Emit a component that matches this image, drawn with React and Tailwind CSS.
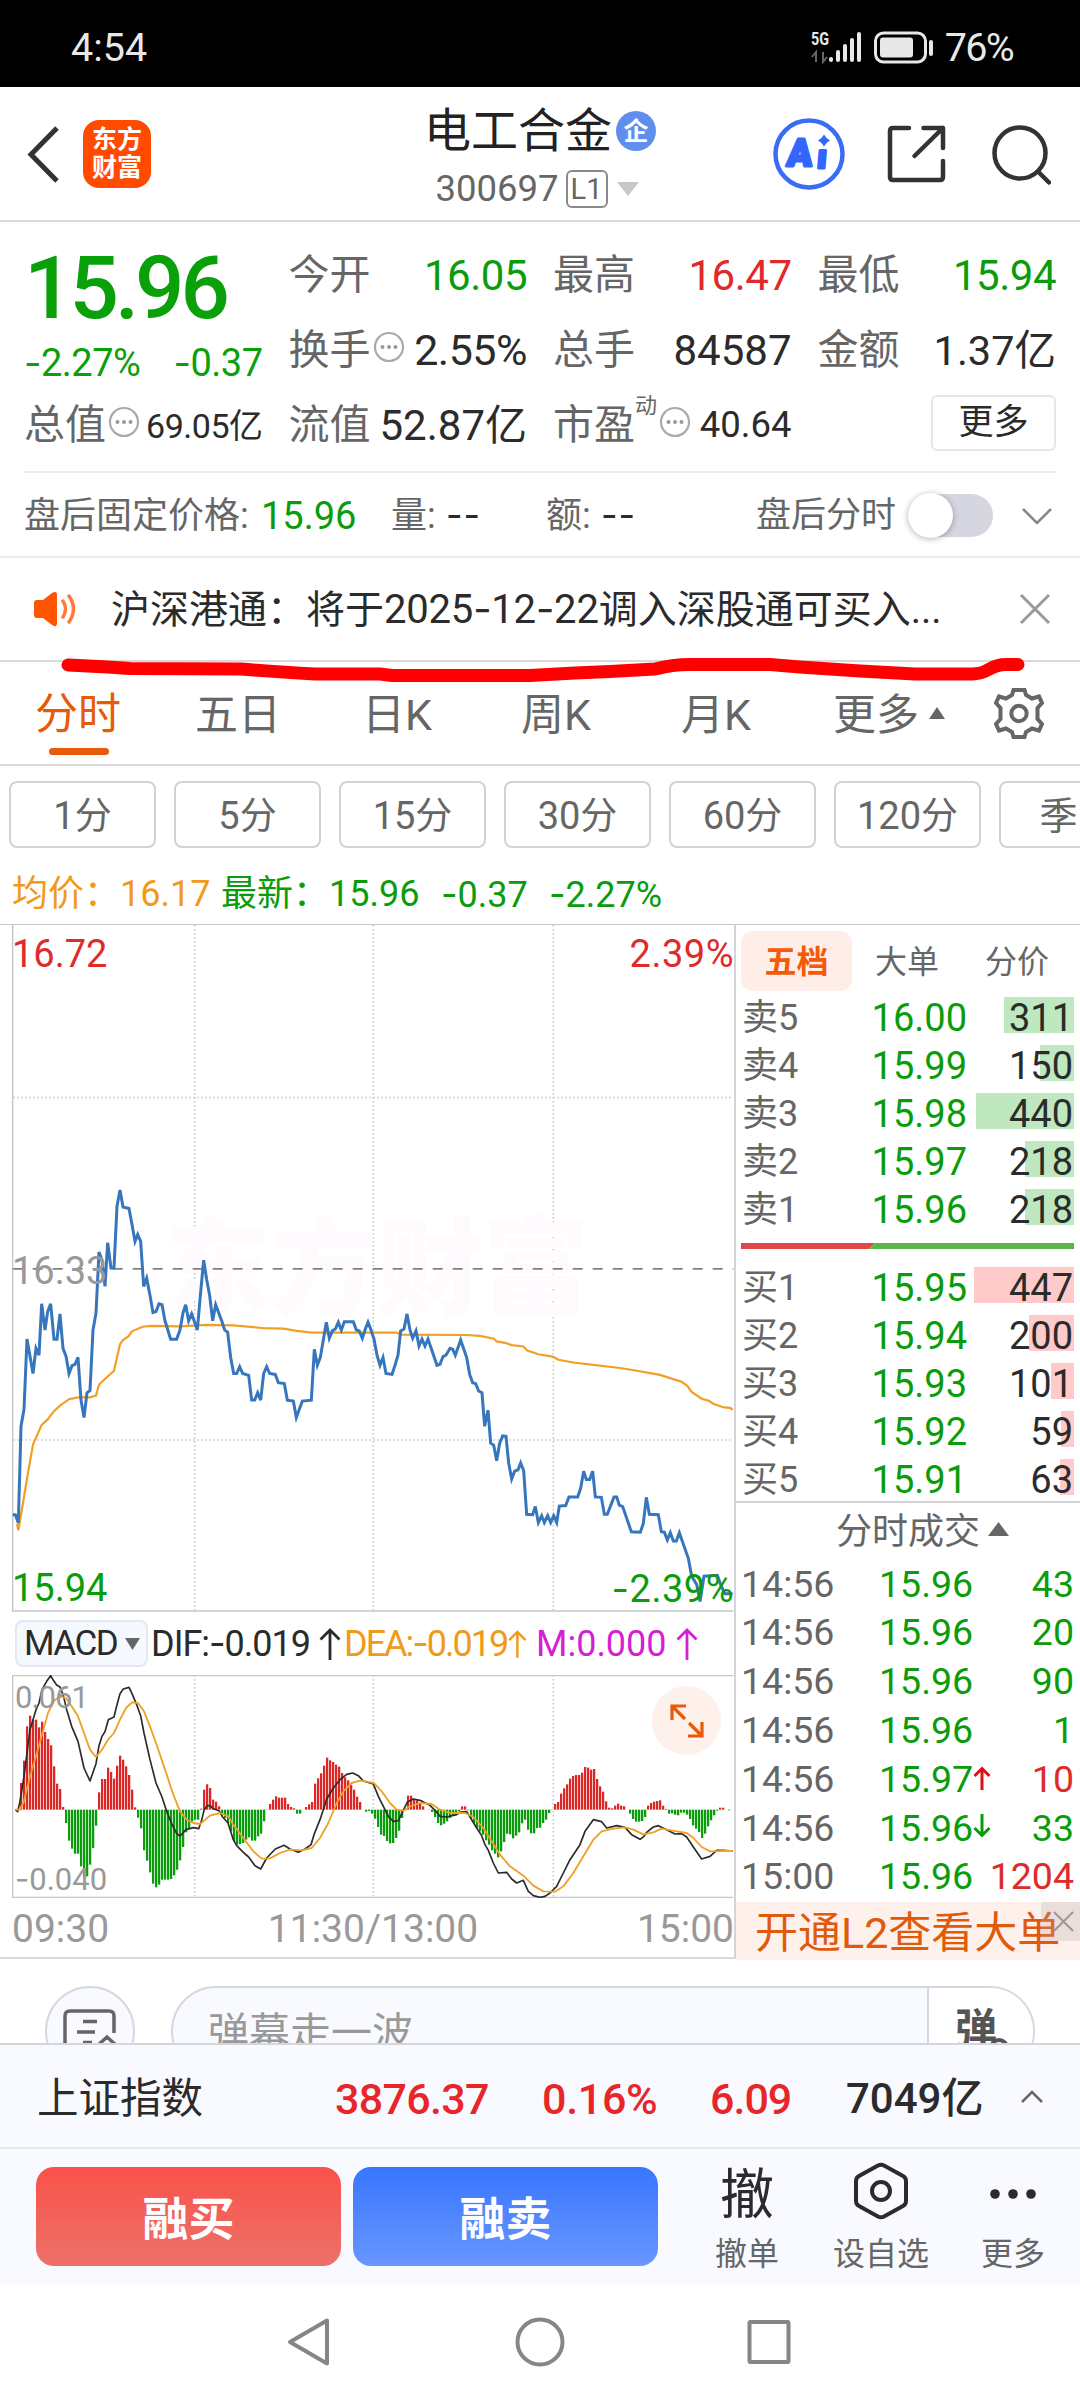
import React from 'react';

// Datos del libro de órdenes
const asks = [
  { label: '卖', level: 5, price: '16.00', qty: 311 },
  { label: '卖', level: 4, price: '15.99', qty: 150 },
  { label: '卖', level: 3, price: '15.98', qty: 440 },
  { label: '卖', level: 2, price: '15.97', qty: 218 },
  { label: '卖', level: 1, price: '15.96', qty: 218 },
];

const bids = [
  { label: '买', level: 1, price: '15.95', qty: 447 },
  { label: '买', level: 2, price: '15.94', qty: 200 },
  { label: '买', level: 3, price: '15.93', qty: 101 },
  { label: '买', level: 4, price: '15.92', qty: 59 },
  { label: '买', level: 5, price: '15.91', qty: 63 },
];

const trades = [
  { time: '14:56', price: '15.96', qty: 43 },
  { time: '14:56', price: '15.96', qty: 20 },
  { time: '14:56', price: '15.96', qty: 90 },
  { time: '14:56', price: '15.96', qty: 1 },
  { time: '14:56', price: '15.97', qty: 10, dir: 'up', buy: true },
  { time: '14:56', price: '15.96', qty: 33, dir: 'down' },
  { time: '15:00', price: '15.96', qty: 1204, buy: true },
];

const periods = ['1', '5', '15', '30', '60', '120'];

// Series de los gráficos, en unidades del viewBox
const priceLine =
  '38,1318 46,1318 55,1336 63,1125 72,1088 81,935 99,1010 108,955 117,970 125,858 135,915 143,875 152,858 162,935 171,935 180,880 189,955 198,972 207,1010 216,993 225,990 234,975 243,1068 252,1106 261,1052 270,1047 279,915 288,878 297,745 306,763 315,820 323,725 333,780 342,780 351,645 360,610 369,647 387,650 396,685 405,722 413,707 422,722 431,820 440,802 450,840 459,877 468,875 477,858 486,860 495,895 512,935 530,935 540,915 549,878 557,860 566,895 575,880 592,915 601,840 611,763 620,805 629,840 638,895 647,860 665,895 674,915 683,920 692,975 701,1010 710,1010 719,995 728,1010 746,1014 755,1068 764,1068 773,1052 782,1068 791,1010 800,995 809,1010 826,1012 835,1030 853,1032 862,1068 880,1070 889,1106 907,1070 934,1068 943,957 952,992 961,975 979,898 988,933 997,917 1006,913 1015,898 1024,915 1033,897 1060,897 1069,915 1078,917 1087,933 1095,915 1104,898 1113,915 1122,935 1131,970 1140,992 1149,975 1158,1010 1176,1012 1185,992 1194,970 1202,917 1212,913 1221,880 1230,915 1238,933 1248,917 1257,950 1266,935 1275,950 1284,935 1311,992 1320,990 1329,973 1338,970 1350,955 1358,957 1366,970 1382,937 1400,975 1409,1012 1418,1030 1427,1032 1436,1048 1446,1052 1454,1125 1464,1090 1472,1162 1481,1166 1490,1200 1499,1162 1508,1146 1518,1147 1526,1205 1535,1240 1544,1223 1554,1220 1562,1205 1571,1222 1580,1317 1598,1318 1606,1300 1615,1335 1625,1320 1633,1335 1643,1320 1652,1335 1661,1320 1670,1335 1678,1299 1697,1298 1707,1279 1733,1279 1742,1260 1751,1223 1759,1241 1769,1241 1778,1223 1786,1279 1804,1280 1813,1317 1822,1317 1832,1298 1842,1279 1850,1279 1858,1297 1868,1300 1894,1355 1921,1356 1930,1337 1939,1280 1948,1317 1975,1318 1984,1355 1993,1356 2002,1373 2011,1357 2020,1375 2029,1375 2038,1357 2050,1382 2065,1413 2075,1452 2090,1470 2100,1507 2112,1452 2152,1450 2162,1470 2174,1490 2198,1490';

const avgLine =
  '51,1338 55,1352 63,1318 82,1235 99,1165 125,1122 143,1110 162,1092 180,1080 207,1066 234,1062 270,1062 288,1058 297,1034 315,1022 342,1004 360,946 369,937 385,929 396,918 428,908 455,906 540,907 620,904 700,905 790,911 850,912 890,917 935,921 1190,921 1205,925 1400,926 1440,928 1482,934 1490,940 1515,943 1535,948 1570,951 1582,960 1615,968 1658,973 1675,980 1720,986 1780,991 1860,998 1910,1004 1980,1013 2010,1020 2045,1028 2062,1037 2075,1050 2105,1065 2125,1069 2140,1076 2172,1084 2190,1085 2198,1089';

const difLine =
  '46,600 53,606 60,575 72,500 90,360 108,300 117,280 126,240 140,215 152,198 160,212 170,226 180,232 190,258 200,300 215,350 234,395 252,475 270,514 288,462 297,408 306,380 315,366 325,330 342,322 351,285 360,252 370,238 387,233 396,252 410,285 422,318 432,370 450,450 468,520 486,562 500,605 515,642 530,672 540,679 558,660 580,654 596,657 604,635 612,602 621,588 630,588 640,597 657,603 668,622 684,640 700,690 710,708 730,728 746,742 765,768 782,778 800,745 826,718 852,707 870,718 895,728 915,718 933,705 942,675 960,630 970,600 980,568 1000,535 1020,510 1040,494 1058,490 1075,498 1090,514 1120,523 1135,560 1150,590 1165,620 1180,635 1195,633 1205,612 1222,577 1240,568 1260,572 1290,587 1305,602 1320,620 1340,622 1370,615 1382,607 1400,606 1410,622 1430,655 1445,678 1455,705 1465,722 1480,760 1495,790 1520,788 1535,808 1550,820 1570,812 1585,845 1600,858 1620,863 1635,860 1650,850 1670,830 1690,790 1710,750 1740,705 1755,665 1780,630 1805,636 1820,655 1850,648 1875,653 1895,675 1920,689 1932,680 1940,668 1960,652 1975,648 2000,660 2025,673 2045,672 2060,682 2080,712 2105,748 2130,740 2150,722 2170,722 2198,724';

const deaLine =
  '46,600 60,600 72,575 90,500 108,440 126,375 144,310 162,273 180,260 198,266 215,290 234,320 252,370 270,420 288,442 306,420 324,390 342,370 360,330 378,295 396,278 414,280 432,305 450,350 468,400 495,480 520,555 540,605 560,630 580,640 600,643 630,618 660,610 685,620 700,645 730,685 760,725 785,747 810,746 840,730 870,720 905,722 935,715 960,685 985,640 1010,580 1030,545 1055,520 1080,513 1100,516 1122,520 1145,545 1170,580 1190,600 1210,603 1230,590 1260,580 1295,583 1320,600 1350,610 1395,610 1420,622 1450,655 1475,695 1500,735 1530,770 1570,798 1600,828 1630,845 1665,846 1690,830 1720,790 1750,740 1780,690 1805,665 1840,657 1875,653 1900,660 1930,674 1960,668 1985,657 2030,665 2060,670 2080,685 2105,712 2130,725 2170,724 2198,724';

// Extremo de cada barra MACD; la línea cero está en 600
const ZERO = 600;
const macdBars = [
  520, 453, 350, 318, 330, 330, 353, 336, 367, 388, 407, 470, 522, 538, 592, 640, 693, 717, 732, 732, 770, 803, 800, 765, 715,
  648, 548, 508, 508, 474, 487, 507, 468, 438, 450, 470, 496, 540, 593, 624, 656, 722, 753, 788, 822, 833, 825, 810, 810, 810,
  808, 797, 780, 752, 712, 668, 655, 635, 630, 630, 597, 540, 524, 535, 570, 576, 590, 615, 625, 640, 665, 695, 705, 703, 700,
  690, 683, 693, 693, 680, 672, 635, 599, 583, 570, 560, 564, 564, 564, 583, 592, 596, 612, 612, 600, 592, 584, 577, 522, 506,
  491, 468, 444, 452, 457, 465, 471, 490, 503, 512, 526, 540, 561, 577, 600, 606, 604, 612, 627, 652, 675, 679, 694, 701, 700,
  685, 663, 625, 602, 558, 558, 568, 572, 580, 590, 600, 601, 607, 622, 640, 647, 642, 635, 625, 618, 612, 605, 590, 590, 602,
  625, 640, 655, 665, 675, 692, 705, 722, 732, 743, 725, 697, 672, 674, 686, 678, 668, 641, 630, 660, 671, 671, 655, 654, 640,
  630, 610, 601, 583, 577, 552, 536, 524, 507, 499, 496, 496, 489, 472, 474, 480, 478, 508, 530, 546, 575, 594, 596, 588, 582,
  588, 590, 600, 612, 628, 636, 636, 634, 622, 588, 580, 576, 574, 572, 588, 598, 612, 611, 615, 617, 609, 609, 615, 628, 647,
  657, 667, 685, 672, 650, 632, 617, 603, 594, 594, 600, 602, 600, 597,
];

const Dash = () => <span className="font-['Inter']">-</span>;

const InfoDot = () => (
  <svg className="mb-2 ml-[2px] h-8 w-8 shrink-0" viewBox="0 0 32 32" fill="none">
    <circle cx="16" cy="16" r="14" stroke="#aaa" strokeWidth="2.2" />
    <circle cx="9.5" cy="16" r="2" fill="#999" />
    <circle cx="16" cy="16" r="2" fill="#999" />
    <circle cx="22.5" cy="16" r="2" fill="#999" />
  </svg>
);

const Arrow = () => (
  <svg className="h-[34px] w-6" viewBox="0 0 24 34" fill="none" stroke="currentColor" strokeWidth="2.8">
    <path d="M12 33V3M2.500 12.500L12 3l9.500 9.500" />
  </svg>
);

const StatusBar = () => (
  <div className="flex h-[87px] items-center bg-black pt-[9px] pl-[71px] pr-[67px] text-[39.500px] leading-none text-[#e8e8e8]">
    <span>4:54</span>
    <svg className="ml-auto h-10 w-[126px]" viewBox="812 27 126 40">
      <text x="813" y="44" fontSize="18" fontWeight="700" fill="#e8e8e8" textLength="18" lengthAdjust="spacingAndGlyphs">5G</text>
      <g fill="none" stroke="#666" strokeWidth="2">
        <path d="M818 61V51l-4 5M825 51v10l4-5" />
      </g>
      <g fill="#e8e8e8">
        <rect x="831" y="56" width="4" height="5" rx="2" />
        <rect x="838" y="49" width="4" height="12" rx="2" />
        <rect x="845" y="43" width="4" height="18" rx="2" />
        <rect x="852" y="37" width="4" height="24" rx="2" />
        <rect x="859" y="31" width="4" height="30" rx="2" />
        <rect x="882" y="36.500" width="33" height="20" rx="3" />
        <rect x="931" y="39" width="4" height="16" rx="2" />
      </g>
      <rect x="877.500" y="32" width="50" height="29" rx="8" fill="none" stroke="#e8e8e8" strokeWidth="3" />
    </svg>
    <span className="ml-[9px] tracking-[-1.700px]">76%</span>
  </div>
);

const Header = () => (
  <div className="grid h-[135px] grid-cols-[400px_280px_400px] border-b-2 border-[#d9d9d9]">
    <div className="flex items-center pl-[25px]">
      <svg className="h-[60px] w-[36px]" viewBox="0 0 36 60" fill="none" stroke="#333" strokeWidth="5">
        <path d="M32 4L6 30.500L32 57" />
      </svg>
      <div className="ml-[22px] flex h-[68px] w-[68px] flex-col items-center justify-center rounded-2xl bg-[#ff4a00] text-[25px] leading-[28px] font-bold text-white">
        <span>东方</span>
        <span>财富</span>
      </div>
    </div>
    <div className="flex flex-col items-center pt-[20px]">
      <div className="flex items-center gap-1">
        <span className="text-[47px] leading-[48px] text-[#222]">电工合金</span>
        <span className="flex h-10 w-10 items-center justify-center rounded-full bg-[#5f8fec] text-[25px] leading-none font-bold text-white">企</span>
      </div>
      <div className="mt-[14px] mr-[5px] flex items-center text-[36.500px] leading-[40px] text-[#666]">
        <span>300697</span>
        <span className="ml-[7px] flex h-[38px] w-[42px] items-center justify-center rounded-md border-2 border-[#8a8a8a] text-[29px] leading-none">L1</span>
        <svg className="ml-2 h-4 w-6" viewBox="0 0 24 16">
          <path d="M1 1h22L12 15z" fill="#c8c8c8" />
        </svg>
      </div>
    </div>
    <div className="flex items-center justify-end pr-[29px]">
      <svg className="h-[72px] w-[72px]" viewBox="0 0 72 72">
        <circle cx="36" cy="36" r="33.500" fill="none" stroke="#3a6cf6" strokeWidth="4.500" />
        <g transform="skewX(-5)" fill="#3366ff" stroke="#3366ff" strokeWidth="3" strokeLinejoin="round" fontWeight="900">
          <text x="17.500" y="48.500" fontSize="38" textLength="25" lengthAdjust="spacingAndGlyphs">A</text>
          <text x="48" y="50" fontSize="33">ı</text>
        </g>
        <path d="M51 16.500q2 4 6 6q-4 2-6 6q-2-4-6-6q4-2 6-6z" fill="#3366ff" />
      </svg>
      <svg className="ml-[41px] h-[60px] w-[62px]" viewBox="0 0 62 60" fill="none" stroke="#333" strokeWidth="4.500" strokeLinecap="round" strokeLinejoin="round">
        <path d="M23 4H7q-3 0-3 3V53q0 3 3 3H54q3 0 3-3V37M37.500 4H57V24M57 4L28.500 32" />
      </svg>
      <svg className="ml-[41px] h-[62px] w-[62px]" viewBox="0 0 62 62" fill="none" stroke="#333" strokeWidth="4.500" strokeLinecap="round">
        <circle cx="31" cy="30" r="25.500" />
        <path d="M49 48.500l11 11" />
      </svg>
    </div>
  </div>
);

const Quote = () => (
  <div className="grid h-[249px] grid-cols-4 grid-rows-[75px_75px_75px] gap-x-[26px] px-6 pt-[16px] text-[41px] leading-none text-[#666]">
    <div className="row-span-2 text-[#0aa00a]">
      <div className="pt-[8px] text-[87px] leading-[84px] font-medium tracking-[-4px]">15.96</div>
      <div className="mt-[12px] flex justify-between text-[38px] leading-[40px] tracking-[-.5px]">
        <span><Dash />2.27%</span>
        <span><Dash />0.37</span>
      </div>
    </div>
    <div className="flex items-center justify-between">
      <span>今开</span>
      <span className="text-[42px] tracking-[-.5px] text-[#0a9c0a]">16.05</span>
    </div>
    <div className="flex items-center justify-between">
      <span>最高</span>
      <span className="text-[42px] tracking-[-.5px] text-[#e02a2a]">16.47</span>
    </div>
    <div className="flex items-center justify-between">
      <span>最低</span>
      <span className="text-[42px] tracking-[-.5px] text-[#0a9c0a]">15.94</span>
    </div>
    <div className="flex items-center">
      <span>换手</span>
      <InfoDot />
      <span className="ml-auto text-[43px] tracking-[-.5px] text-[#2b2b2b]">2.55%</span>
    </div>
    <div className="flex items-center justify-between">
      <span>总手</span>
      <span className="text-[42px] text-[#2b2b2b]">84587</span>
    </div>
    <div className="flex items-center justify-between">
      <span>金额</span>
      <span className="text-[41.500px] text-[#2b2b2b]">1.37亿</span>
    </div>
    <div className="flex items-center">
      <span>总值</span>
      <InfoDot />
      <span className="ml-auto text-[34px] tracking-[-.5px] text-[#2b2b2b]">69.05亿</span>
    </div>
    <div className="flex items-center justify-between">
      <span>流值</span>
      <span className="text-[42px] text-[#2b2b2b]">52.87亿</span>
    </div>
    <div className="flex items-center">
      <span>市盈</span>
      <span className="mb-10 text-[22px]">动</span>
      <InfoDot />
      <span className="ml-auto text-[36.500px] text-[#2b2b2b]">40.64</span>
    </div>
    <div className="flex items-center justify-end">
      <button className="mb-[6px] h-14 w-[125px] rounded-md border-2 border-[#e6e6e6] text-[35px] text-[#2b2b2b]">更多</button>
    </div>
  </div>
);

const AfterHours = () => (
  <div className="mx-6 flex h-[85px] items-center border-t-2 border-[#ececec] pt-[2px] text-[36px] leading-none text-[#666]">
    <span className="w-[237px] whitespace-nowrap">盘后固定价格:</span>
    <span className="w-[130px] text-[38px] text-[#0a9c0a]">15.96</span>
    <span className="w-[55px]">量:</span>
    <span className="w-[100px] text-[#2b2b2b]"><Dash /> <span className="-ml-[8px]"><Dash /></span></span>
    <span className="w-[55px]">额:</span>
    <span className="text-[#2b2b2b]"><Dash /> <span className="-ml-[8px]"><Dash /></span></span>
    <span className="ml-auto text-[35px]">盘后分时</span>
    <span className="ml-3 flex h-[43px] w-[85px] items-center rounded-full bg-[#d5d6df]">
      <span className="h-[45px] w-[45px] rounded-full bg-white shadow-[0_1px_6px_rgba(0,0,0,0.3)]" />
    </span>
    <svg className="ml-[28px] mr-[3px] h-[18px] w-8" viewBox="0 0 32 18" fill="none" stroke="#888" strokeWidth="2.500">
      <path d="M2 2l14 14L30 2" />
    </svg>
  </div>
);

const Notice = () => (
  <div className="relative flex h-[106px] items-center border-t-2 border-b-2 border-t-[#ececec] border-b-[#d9d9d9] pl-[33px]">
    <svg className="h-9 w-[46px]" viewBox="0 0 46 36">
      <path d="M1 12q0-3 3-3h6L19 2q5-3 5 2v28q0 5-5 2L10 27H4q-3 0-3-3z" fill="#ff5500" />
      <path d="M30 10q5 8 0 16M36 5q9 13 0 26" fill="none" stroke="#ff7a3c" strokeWidth="3.500" strokeLinecap="round" />
    </svg>
    <span className="ml-[32px] text-[39px] leading-none whitespace-nowrap text-[#2b2b2b]">
      沪深港通：将于<span className="text-[40px] tracking-[-.2px]">2025<Dash />12<Dash />22</span>调入深股通可买入...
    </span>
    <svg className="ml-auto mr-[29px] h-8 w-8" viewBox="0 0 32 32" fill="none" stroke="#999" strokeWidth="3">
      <path d="M2 2l28 28M30 2L2 30" />
    </svg>
    {/* Trazo rojo a mano sobre el borde */}
    <svg className="absolute top-[91px] left-0 z-10 h-10 w-[1080px]" viewBox="0 648 1080 40" fill="none">
      <path
        d="M68 664L108 666L130 667.500L240 668Q280 671 315 673H380L392 674.500H530L575 672L610 670.500L655 668Q672 663.500 690 663.500H770L800 666L860 670L915 673H972C990 673 988 663.500 1006 663.500H1018"
        stroke="#ff0000"
        strokeWidth="13"
        strokeLinejoin="round"
        strokeLinecap="round"
      />
    </svg>
  </div>
);

const ChartTabs = () => (
  <div className="flex h-[104px] items-center border-b-2 border-[#d9d9d9] pt-[5px] pl-[35px] text-[43px] leading-none text-[#666]">
    <div className="flex w-[160px] flex-col pt-[16px] text-[#e65a0a]">
      <span>分时</span>
      <span className="mt-[12px] ml-[14px] h-[7px] w-[60px] rounded-full bg-[#e65a0a]" />
    </div>
    <span className="w-[167px]">五日</span>
    <span className="w-[159px]">日K</span>
    <span className="w-[160px]">周K</span>
    <span className="w-[152px]">月K</span>
    <span>更多</span>
    <svg className="mb-[5px] ml-[10px] h-3 w-4" viewBox="0 0 16 12">
      <path d="M8 0l8 12H0z" fill="#666" />
    </svg>
    <svg className="mb-[4px] ml-[49px] h-[51px] w-[50px]" viewBox="0 0 50 51" fill="none" stroke="#666" strokeWidth="4">
      <path d="M19.500 2H30.500L32 7L38 10.500L45 8.500L48 15L43.500 20V31L48 36L45 42.500L38 40.500L32 44L30.500 49H19.500L18 44L12 40.500L5 42.500L2 36L6.500 31V20L2 15L5 8.500L12 10.500L18 7z" />
      <circle cx="25" cy="25.500" r="7.700" />
    </svg>
  </div>
);

const Periods = () => (
  <div className="flex h-[83px] gap-[18px] overflow-hidden pt-[15px] pl-[9px] text-[38px] leading-none text-[#666]">
    {periods.map((p) => (
      <button key={p} className="h-[67px] w-[147px] shrink-0 rounded-lg border-2 border-[#d2d2d2] pt-[3px]">
        {p}<span className="text-[37px]">分</span>
      </button>
    ))}
    <button className="h-[67px] w-[147px] shrink-0 rounded-lg border-2 border-[#d2d2d2] pt-[3px] pr-[28px]">季</button>
  </div>
);

const Averages = () => (
  <div className="flex h-[75px] items-center pt-[15px] pl-3 text-[36px] leading-none text-[#0a9c0a]">
    <span className="w-[108px] text-[#f09a1a]">均价：</span>
    <span className="w-[101px] text-[#f09a1a]">16.17</span>
    <span className="w-[108px]">最新：</span>
    <span className="w-[112px]">15.96</span>
    <span className="w-[108px]"><Dash />0.37</span>
    <span><Dash />2.27%</span>
  </div>
);

const PriceChart = () => (
  <div className="relative h-[687px] w-[734px] text-[38px] leading-none">
    <svg className="h-full w-full" viewBox="0 32 2202 1498" preserveAspectRatio="none" fill="none">
      <g stroke="#c4c4c4" strokeWidth="1.500" strokeDasharray="1.500 2.500">
        <path vectorEffect="non-scaling-stroke" d="M584 32V1530" />
        <path vectorEffect="non-scaling-stroke" d="M1120 32V1530" />
        <path vectorEffect="non-scaling-stroke" d="M1660 32V1530" />
        <path vectorEffect="non-scaling-stroke" d="M40 408H2200" />
        <path vectorEffect="non-scaling-stroke" d="M40 1155H2200" />
      </g>
      <path vectorEffect="non-scaling-stroke" d="M38 32V1528H2200" stroke="#c8c8cc" strokeWidth="1.500" />
    </svg>
    <span className="absolute top-[292px] left-[165px] text-[106px] font-black text-[#fefafe]">东方财富</span>
    <svg className="absolute inset-0 h-full w-full" viewBox="0 32 2202 1498" preserveAspectRatio="none" fill="none">
      <path vectorEffect="non-scaling-stroke" d="M38 782H2200" stroke="#808080" strokeWidth="1.800" strokeDasharray="10 10" />
      <polyline vectorEffect="non-scaling-stroke" points={avgLine} stroke="#f0a024" strokeWidth="2.200" />
      <polyline vectorEffect="non-scaling-stroke" points={priceLine} stroke="#3676bc" strokeWidth="3" />
    </svg>
    <span className="absolute top-[10px] left-[12px] text-[#e02a2a]">16.72</span>
    <span className="absolute top-[10px] right-0 tracking-[.5px] text-[#e02a2a]">2.39%</span>
    <span className="absolute top-[327px] left-[12px] text-[#999]">16.33</span>
    <span className="absolute top-[644px] left-[12px] text-[#0a9c0a]">15.94</span>
    <span className="absolute top-[644px] right-0 tracking-[.5px] text-[#0a9c0a]"><Dash />2.39%</span>
  </div>
);

const MacdLegend = () => (
  <div className="flex h-[63px] items-center pl-[15px] text-[36px] leading-none tracking-[-1px]">
    <div className="flex h-[47px] w-[133px] items-center rounded-lg border-2 border-[#e3e7f0] bg-[#f5f8fe] pl-[7px] text-[35px] tracking-[-1.500px] text-[#2b2b2b]">
      MACD
      <svg className="ml-[8px] h-3 w-[15px]" viewBox="0 0 15 12">
        <path d="M0 0h15L7.500 12z" fill="#666" />
      </svg>
    </div>
    <div className="flex w-[194px] items-center justify-between pl-[3px] text-[#2b2b2b]">
      <span>DIF:<Dash />0.019</span>
      <Arrow />
    </div>
    <div className="flex w-[186px] items-center justify-between pl-[2px] tracking-[-2px] text-[#f09a1a]">
      <span>DEA:<Dash />0.019</span>
      <Arrow />
    </div>
    <div className="flex w-[171px] items-center justify-between pl-[8px] tracking-normal text-[#d41fd4]">
      <span>M:0.000</span>
      <Arrow />
    </div>
  </div>
);

const MacdChart = () => (
  <div className="relative h-[223px] w-[734px] text-[31px] leading-none text-[#999]">
    <svg className="h-full w-full" viewBox="0 196 2202 669" preserveAspectRatio="none" fill="none">
      <g stroke="#c4c4c4" strokeWidth="4.500" strokeDasharray="4.500 7.500">
        <path d="M584 196V866M1120 196V866M1660 196V866" />
      </g>
      <path d="M2200 198H38V863H2200" stroke="#c8c8cc" strokeWidth="4" />
      {macdBars.map((y, i) => (
        <rect key={i} x={60 + i * 9} y={Math.min(y, ZERO)} width="6.800" height={Math.abs(y - ZERO)} fill={y < ZERO ? '#dd2626' : '#0a9c0a'} />
      ))}
      <polyline points={difLine} stroke="#2b2b2b" strokeWidth="5" strokeLinejoin="round" />
      <polyline points={deaLine} stroke="#f0a024" strokeWidth="5.500" strokeLinejoin="round" />
    </svg>
    <span className="absolute top-[7px] left-[15px] tracking-[-1px]">0.061</span>
    <span className="absolute bottom-[3px] left-[15px]"><Dash />0.040</span>
    <span className="absolute top-[11px] left-[652px] flex h-[69px] w-[69px] items-center justify-center rounded-full bg-[#fef0eb]">
      <svg className="h-[34px] w-[34px]" viewBox="0 0 34 34" fill="none" stroke="#e65a0a" strokeWidth="3.200">
        <path d="M2 16V2h14M2 2l13 13M32 18v14H18M32 32L19 19" />
      </svg>
    </span>
  </div>
);

const OrderRow = ({ row, color }) => (
  <div className="flex h-12 items-start text-[38px] leading-[42px] text-[#666]">
    <span className="w-[100px] text-[36px]">{row.label}{row.level}</span>
    <span className="w-[125px] text-right text-[#0a9c0a]">{row.price}</span>
    <span className="relative ml-auto flex h-9 w-[104px] justify-end pr-[1px] text-[#2b2b2b]">
      <span className={`absolute top-0 right-0 h-9 ${color}`} style={{ width: Math.round(row.qty * 0.2237) }} />
      <span className="relative">{row.qty}</span>
    </span>
  </div>
);

const OrderBook = () => (
  <div className="h-[1032px] w-[346px] border-l-2 border-[#d4d4d8]">
    <div className="flex items-center pt-[6px] pl-[5px] text-[32px] leading-none text-[#666]">
      <span className="flex h-[60px] w-[111px] items-center justify-center rounded-xl bg-[#ffeee7] pt-[2px] font-bold text-[#f55a0a]">五档</span>
      <span className="ml-[23px] pt-[2px]">大单</span>
      <span className="ml-[46px] pt-[2px]">分价</span>
    </div>
    <div className="pt-[6px] pr-[6px] pl-[6px]">
      {asks.map((row) => <OrderRow key={row.level} row={row} color="bg-[#c0e8c0]" />)}
    </div>
    <svg className="mt-[6px] ml-[5px] h-[6px] w-[333px]" viewBox="0 0 333 6">
      <path d="M0 0h134l-6 6H0z" fill="#e04848" />
      <path d="M134 0h199v6H128z" fill="#5cb548" />
    </svg>
    <div className="mt-[18px] h-[234px] pr-[6px] pl-[6px]">
      {bids.map((row) => <OrderRow key={row.level} row={row} color="bg-[#ffcaca]" />)}
    </div>
    <div className="flex h-[59px] items-center border-t-2 border-[#d4d4d8] pl-[100px] text-[36px] leading-none text-[#666]">
      分时成交
      <svg className="mb-[6px] ml-2 h-[14px] w-[21px]" viewBox="0 0 21 14">
        <path d="M10.500 0L21 14H0z" fill="#666" />
      </svg>
    </div>
    {trades.map((t, i) => (
      <div key={i} className="flex h-[48.800px] items-center pr-[6px] pl-[5px] text-[37.500px] leading-none text-[#666]">
        <span className="w-[138px]">{t.time}</span>
        <span className="text-[#0a9c0a]">{t.price}</span>
        {t.dir && (
          <svg className="mb-1 h-6 w-[18px]" viewBox="0 0 18 24" fill="none" stroke={t.dir === 'up' ? '#dd1111' : '#0a9c0a'} strokeWidth="3">
            {t.dir === 'up' ? <path d="M9 24V3M1.500 10L9 2.500L16.500 10" /> : <path d="M9 0V21M1.500 14L9 21.500L16.500 14" />}
          </svg>
        )}
        <span className={t.buy ? 'ml-auto text-[#e02a2a]' : 'ml-auto text-[#0a9c0a]'}>{t.qty}</span>
      </div>
    ))}
    <div className="relative flex h-[58px] items-center bg-[#fef1ec] pt-[6px] pl-[19px] text-[43px] leading-none whitespace-nowrap text-[#e05a0c]">
      开通L2查看大单
      <span className="absolute top-0 right-0 flex h-[39px] w-[39px] items-center justify-center bg-[#b4a5a5]/25 pl-[6px]">
        <svg className="h-[21px] w-[21px]" viewBox="0 0 21 21" fill="none" stroke="#999" strokeWidth="2">
          <path d="M1 1l19 19M20 1L1 20" />
        </svg>
      </span>
    </div>
  </div>
);

const CommentBar = () => (
  <div className="flex h-[86px] items-start overflow-hidden border-t-2 border-[#d9d9dc] pt-[27px] pl-[45px]">
    <div className="flex h-[90px] w-[90px] shrink-0 justify-center rounded-full border-2 border-[#d5d8e0] bg-[#f8faff] pt-[20px]">
      <svg className="h-[54px] w-[54px]" viewBox="0 0 54 54" fill="none" stroke="#666" strokeWidth="3.500">
        <path d="M51 25V8q0-5-5-5H7Q2 3 2 8v42M20 13.500h14M14 24h18M20 34.500h9M34 38l10-9l10 9" />
      </svg>
    </div>
    <div className="ml-[36px] flex h-[90px] w-[864px] shrink-0 overflow-hidden rounded-full border-2 border-[#d5d8e0] bg-[#f8faff]">
      <div className="flex-1 pt-[23px] pl-[35px] text-[41px] leading-[44px] text-[#999]">弹幕走一波</div>
      <div className="relative w-[106px] border-l-2 border-[#d5d8e0] bg-white pt-[20px] pl-[26px] text-[42px] leading-[44px] font-bold text-[#555]">
        弹
        <span className="absolute top-[50px] left-[60px] h-5 w-5 rounded-full border-4 border-[#555] bg-white" />
      </div>
    </div>
  </div>
);

const IndexBar = () => (
  <div className="flex h-[106px] items-center border-t-2 border-b-2 border-t-[#d4d6dc] border-b-[#e6e8ec] bg-[#f8faff] pt-[6px] pl-[37px] text-[43px] leading-none font-medium text-[#e8262a]">
    <span className="w-[298px] text-[41.500px] font-normal text-[#2b2b2b]">上证指数</span>
    <span className="w-[207px] tracking-[-.7px]">3876.37</span>
    <span className="w-[168px] tracking-[-.3px]">0.16%</span>
    <span className="w-[136px] tracking-[-1px]">6.09</span>
    <span className="text-[42px] text-[#2b2b2b]">7049亿</span>
    <svg className="mb-[4px] ml-auto mr-[36px] h-[14px] w-6" viewBox="0 0 24 14" fill="none" stroke="#666" strokeWidth="2.500">
      <path d="M2 12L12 2l10 10" />
    </svg>
  </div>
);

const Actions = () => (
  <div className="flex h-[135px] bg-[#f8faff] pt-[18px] pl-[36px] text-[32px] leading-none text-[#666]">
    <button className="h-[99px] w-[305px] rounded-[18px] bg-linear-to-b from-[#f95149] to-[#ec7069] pt-[4px] text-[46px] font-bold text-white">融买</button>
    <button className="ml-[12px] h-[99px] w-[305px] rounded-[18px] bg-linear-to-b from-[#3776fe] to-[#6996ff] pt-[4px] text-[46px] font-bold text-white">融卖</button>
    <div className="ml-[47px] flex w-[84px] flex-col items-center">
      <span className="pt-[2px] text-[54px] leading-[54px] text-[#2b2b2b]">撤</span>
      <span className="mt-[15px]">撤单</span>
    </div>
    <div className="ml-[42px] flex w-[100px] flex-col items-center">
      <svg className="-mt-[5px] h-[58px] w-[54px]" viewBox="0 0 54 58" fill="none" stroke="#2b2b2b" strokeWidth="4">
        <path d="M24 3.500q3-1.600 6 0l19 10.500q3 1.700 3 5v20q0 3.300-3 5L30 54.500q-3 1.600-6 0L5 44q-3-1.700-3-5V19q0-3.300 3-5z" />
        <circle cx="27" cy="29" r="9" />
      </svg>
      <span className="mt-[18px]">设自选</span>
    </div>
    <div className="ml-[49px] flex w-[66px] flex-col items-center">
      <svg className="mt-[21px] h-3 w-12" viewBox="0 0 48 12" fill="#2b2b2b">
        <circle cx="6" cy="6" r="4.800" />
        <circle cx="24" cy="6" r="4.800" />
        <circle cx="42" cy="6" r="4.800" />
      </svg>
      <span className="mt-[38px]">更多</span>
    </div>
  </div>
);

const NavBar = () => (
  <div className="flex h-[115px] items-center bg-white pl-[286px]">
    <svg className="h-[52px] w-[506px]" viewBox="286 2316 506 52" fill="none" stroke="#868686" strokeWidth="4" strokeLinejoin="round">
      <path d="M327 2320.500V2363.500L290 2342z" />
      <circle cx="540" cy="2342" r="22.500" />
      <rect x="749.500" y="2322" width="39" height="40" rx="1" />
    </svg>
  </div>
);

const App = () => (
  <div className="h-[2400px] w-[1080px] overflow-hidden bg-white font-['Roboto','Noto_Sans_CJK_SC',sans-serif]">
    <StatusBar />
    <Header />
    <Quote />
    <AfterHours />
    <Notice />
    <ChartTabs />
    <Periods />
    <Averages />
    <div className="flex h-[1033px] border-t border-[#c8c8cc]">
      <div className="w-[734px]">
        <PriceChart />
        <MacdLegend />
        <MacdChart />
        <div className="flex h-[59px] items-center justify-between pt-[4px] pl-3 text-[39px] leading-none text-[#999]">
          <span>09:30</span>
          <span>11:30/13:00</span>
          <span>15:00</span>
        </div>
      </div>
      <OrderBook />
    </div>
    <CommentBar />
    <IndexBar />
    <Actions />
    <NavBar />
  </div>
);

export default App;
